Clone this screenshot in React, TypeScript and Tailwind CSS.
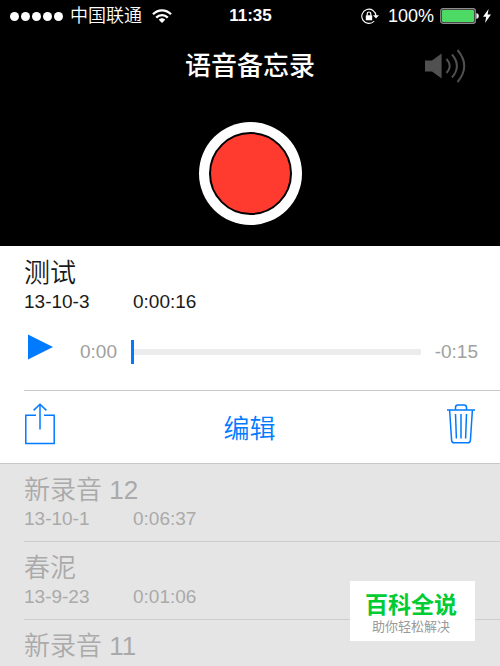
import { useState } from 'react';

type Recording = {
  title: string;
  date?: string;
  length?: string;
};

const selected: Recording = { title: '测试', date: '13-10-3', length: '0:00:16' };

const recordings: Recording[] = [
  { title: '新录音 12', date: '13-10-1', length: '0:06:37' },
  { title: '春泥', date: '13-9-23', length: '0:01:06' },
  { title: '新录音 11' },
];

function WifiIcon() {
  return (
    <svg width="20" height="14" viewBox="0 0 20 14" fill="none" stroke="#fff" strokeWidth="2.3">
      <path d="M1 5.2 C6 0 14 0 19 5.2" />
      <path d="M4.2 8.6 C7.4 5.2 12.6 5.2 15.8 8.6" />
      <path d="M6.8 10.8 C8.6 8.8 11.4 8.8 13.2 10.8 L10 14 Z" fill="#fff" stroke="none" />
    </svg>
  );
}

function RotationLockIcon() {
  return (
    <svg width="18" height="17" viewBox="0 0 18 17" fill="none" stroke="#fff">
      <path d="M15 8 A7.1 7.1 0 1 0 13.2 13" strokeWidth="1.1" />
      <path d="M12 7.2 H18 L15 10.6 Z" fill="#fff" stroke="none" />
      <rect x="4.8" y="7.2" width="6.4" height="5" rx="0.5" fill="#fff" stroke="none" />
      <path d="M6.2 7.6 V5.8 a1.8 1.8 0 0 1 3.6 0 V7.6" strokeWidth="1.2" />
    </svg>
  );
}

function BatteryIcon() {
  return (
    <svg width="40" height="16" viewBox="0 0 40 16">
      <rect x="0.8" y="0.8" width="34.4" height="14.4" rx="2" fill="none" stroke="#8d8d8d" strokeWidth="1.4" />
      <rect x="2" y="2" width="32" height="12" rx="1" fill="#4cd964" />
      <path d="M36.4 5 Q38.8 5.4 38.8 8 Q38.8 10.6 36.4 11 Z" fill="#fff" />
    </svg>
  );
}

function BoltIcon() {
  return (
    <svg width="8" height="14" viewBox="0 0 8 14" fill="#fff">
      <path d="M5.6 0 L0 7.8 H3.2 L2 14 L8 5.6 H4.6 Z" />
    </svg>
  );
}

function SpeakerIcon() {
  return (
    <svg width="42" height="34" viewBox="0 0 42 34" fill="none" stroke="#505050" strokeWidth="2">
      <path d="M0 11.5 H7 L16.6 4.5 V29.5 L7 22.5 H0 Z" fill="#505050" stroke="none" />
      <path d="M21.5 10 Q28 17 21.5 24" />
      <path d="M27 5.5 Q36.8 17 27 28.5" />
      <path d="M32.5 1 Q46 17 32.5 33" />
    </svg>
  );
}

function ShareIcon() {
  return (
    <svg width="32" height="42" viewBox="0 0 32 42" fill="none" stroke="#007aff" strokeWidth="1.5">
      <path d="M12 12.2 H1.8 V40.4 H30.2 V12.2 H20" />
      <path d="M16 26.5 V1.5" />
      <path d="M9.6 7.4 L16 1.2 L22.4 7.4" />
    </svg>
  );
}

function TrashIcon() {
  return (
    <svg width="28" height="40" viewBox="0 0 28 40" fill="none" stroke="#007aff" strokeWidth="1.5">
      <path d="M0 6 H28" />
      <path d="M8.5 6 V3.4 Q8.5 1 11 1 H17 Q19.5 1 19.5 3.4 V6" />
      <path d="M2.6 6 L4.6 36.4 Q4.8 38.8 7.2 38.8 H20.8 Q23.2 38.8 23.4 36.4 L25.4 6" />
      <path d="M8.5 10 L9.4 34.5 M14 10 V34.5 M19.5 10 L18.6 34.5" />
    </svg>
  );
}

function StatusBar() {
  return (
    <div className="grid grid-cols-[1fr_auto_1fr] items-center h-8 pl-[10px] pr-[9px] text-lg">
      <div className="flex items-center">
        <div className="flex gap-[2px]">
          {[0, 1, 2, 3, 4].map((dot) => (
            <span key={dot} className="size-[9px] rounded-full bg-white" />
          ))}
        </div>
        <span className="ml-[7px] mr-[10px] font-[350]">中国联通</span>
        <WifiIcon />
      </div>
      <span className="text-[17px] font-bold">11:35</span>
      <div className="flex items-center justify-end">
        <RotationLockIcon />
        <span className="ml-[9px] mr-[6px]">100%</span>
        <BatteryIcon />
        <span className="ml-[3px]">
          <BoltIcon />
        </span>
      </div>
    </div>
  );
}

function RecordingInfo({ recording }: { recording: Recording }) {
  return (
    <>
      <h2 className="text-[26px] leading-8 font-[350]">{recording.title}</h2>
      {recording.date && (
        <p className="flex text-[19px] leading-[26px]">
          <span className="w-[109px]">{recording.date}</span>
          <span>{recording.length}</span>
        </p>
      )}
    </>
  );
}

export default function App() {
  const [position, setPosition] = useState(0);

  return (
    <main className="relative flex flex-col h-screen overflow-hidden bg-[#e5e5e5] font-['Liberation_Sans','Noto_Sans_CJK_SC',sans-serif]">
      <header className="shrink-0 bg-black text-white pb-[21px]">
        <StatusBar />
        <div className="grid grid-cols-[1fr_auto_1fr] items-center h-[68px] px-[33px]">
          <h1 className="col-start-2 text-[26px] font-medium">语音备忘录</h1>
          <button aria-label="扬声器" className="justify-self-end">
            <SpeakerIcon />
          </button>
        </div>
        <div className="flex justify-center pt-[22px]">
          <button aria-label="录音" className="size-[103px] rounded-full bg-white p-[10px]">
            <span className="block size-full rounded-full border-2 border-black bg-[#ff3b30]" />
          </button>
        </div>
      </header>

      <section className="shrink-0 bg-white text-[#1a1a1a] border-b border-[#c8c8c8]">
        <div className="pl-6 pt-[11px]">
          <RecordingInfo recording={selected} />
          <div className="flex items-center h-[74px] pr-[22px] text-[19px] text-[#a0a0a0]">
            <button aria-label="播放" className="mr-[27px] mb-[10px] ml-1">
              <svg width="25" height="26" viewBox="0 0 25 26" fill="#007aff">
                <path d="M0 0.5 L25 13 L0 25.5 Z" />
              </svg>
            </button>
            <span className="mr-[14px]">0:00</span>
            <input
              type="range"
              aria-label="播放进度"
              min={0}
              max={16}
              value={position}
              onChange={(e) => setPosition(Number(e.target.value))}
              className="appearance-none flex-1 min-w-0 h-6 bg-transparent [&::-webkit-slider-runnable-track]:h-[6px] [&::-webkit-slider-runnable-track]:bg-[#ececec] [&::-webkit-slider-thumb]:appearance-none [&::-webkit-slider-thumb]:w-[3px] [&::-webkit-slider-thumb]:h-6 [&::-webkit-slider-thumb]:-mt-[9px] [&::-webkit-slider-thumb]:bg-[#007aff]"
            />
            <span className="ml-[14px]">-0:15</span>
          </div>
        </div>
        <div className="ml-6 mt-px border-t border-[#c8c8c8] grid grid-cols-[1fr_auto_1fr] items-center h-[73px] pr-[25px]">
          <button aria-label="共享" className="justify-self-start mb-[6px]">
            <ShareIcon />
          </button>
          <button className="pt-1 text-[26px] font-[350] text-[#007aff]">编辑</button>
          <button aria-label="删除" className="justify-self-end mb-[6px]">
            <TrashIcon />
          </button>
        </div>
      </section>

      <ul className="pl-6 text-[#aaa]">
        {recordings.map((recording) => (
          <li key={recording.title} className="h-[78px] pt-[10px] border-b border-[#cdcdcd]">
            <RecordingInfo recording={recording} />
          </li>
        ))}
      </ul>

      <aside className="absolute right-[25px] bottom-[25px] w-[125px] h-[60px] bg-white text-center pt-[10px] pr-[3px]">
        <p className="text-[23px] leading-7 font-bold text-[#0c3]">百科全说</p>
        <p className="text-[13px] leading-4 text-[#999]">助你轻松解决</p>
      </aside>
    </main>
  );
}
